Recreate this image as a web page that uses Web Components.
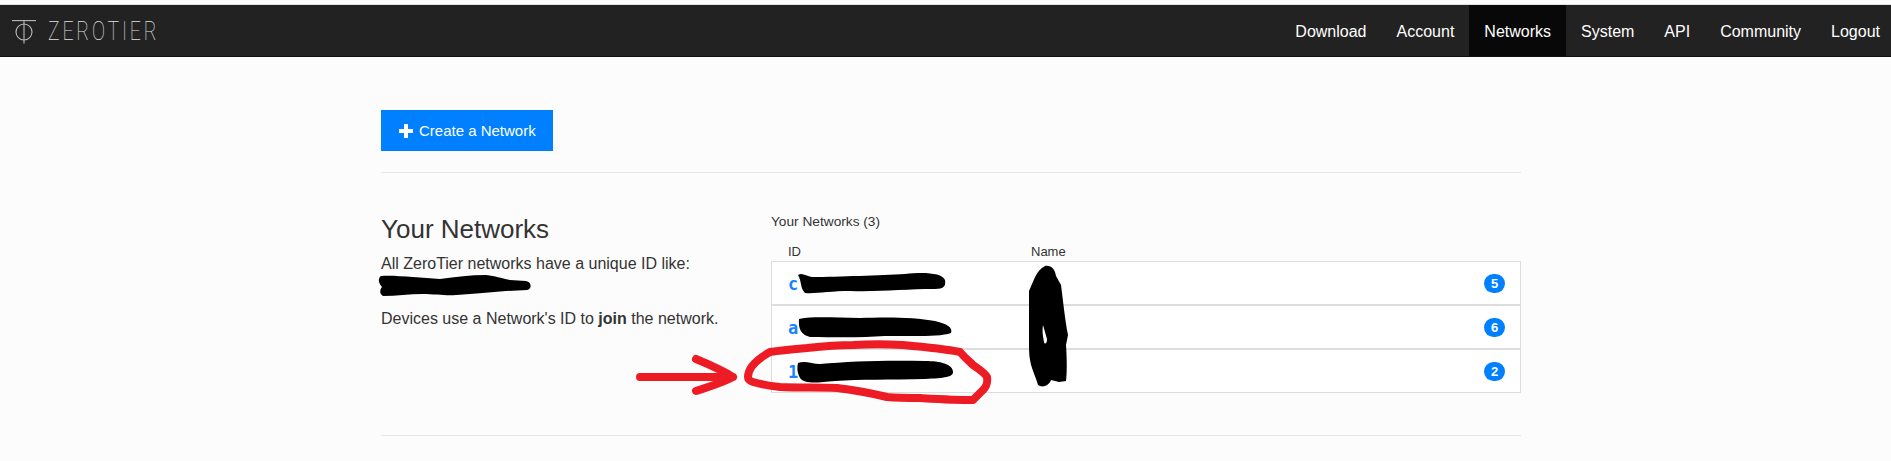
<!DOCTYPE html>
<html>
<head>
<meta charset="utf-8">
<title>ZeroTier</title>
<style>
    html, body { margin: 0; padding: 0; background: #fcfcfc; }
    body { font-family: "Liberation Sans", Arial, sans-serif; color: #333; height: 461px; overflow: hidden; }
</style>
</head>
<body>
<zt-navbar></zt-navbar>
<zt-page>
    <zt-create-button>Create a Network</zt-create-button>
    <zt-networks-section>
        <zt-network-row slot="rows" net-id="c" badge="5"></zt-network-row>
        <zt-network-row slot="rows" net-id="a" badge="6"></zt-network-row>
        <zt-network-row slot="rows" net-id="1" badge="2"></zt-network-row>
    </zt-networks-section>
</zt-page>
<zt-annotations></zt-annotations>

<script>
class ZtNavbar extends HTMLElement {
    constructor() {
        super();
        this.attachShadow({ mode: "open" });
    }
    connectedCallback() {
        const links = ["Download", "Account", "Networks", "System", "API", "Community", "Logout"];
        const items = links.map(name => `<a href="#" class="${name === "Networks" ? "active" : ""}">${name}</a>`).join("");
        this.shadowRoot.innerHTML = `
        <style>
            :host { display: block; margin-top: 4px; border-top: 1px solid #e0e0e0; }
            nav {
                background-color: #222;
                border-bottom: 1px solid #111;
                display: flex;
                height: 51px;
                justify-content: space-between;
            }
            .brand { align-items: flex-start; display: flex; padding: 15px 0 0 12px; }
            .brand svg { display: block; }
            .word {
                color: #e2e2e2;
                font-family: Roboto, "Liberation Sans", sans-serif;
                font-size: 25px;
                font-weight: 100;
                letter-spacing: 3.6px;
                line-height: 24px;
                margin-left: 12px;
                transform: scaleX(.78);
                transform-origin: left center;
            }
            .links { display: flex; margin-right: -4px; }
            a {
                align-items: center;
                color: #fff;
                display: flex;
                font-size: 16px;
                padding: 2px 15px 0;
                text-decoration: none;
            }
            a.active { background-color: #080808; }
        </style>
        <nav>
            <div class="brand">
                <svg width="24" height="24" viewBox="0 0 24 24" fill="none" stroke="#bbb" stroke-width="1.1">
                    <path d="M0 .6H24"/>
                    <circle cx="12" cy="12" r="8"/>
                    <path d="M12 .6V23.5"/>
                </svg>
                <span class="word">ZEROTIER</span>
            </div>
            <div class="links">${items}</div>
        </nav>
    `;
    }
}

class ZtPage extends HTMLElement {
    constructor() {
        super();
        this.attachShadow({ mode: "open" });
        this.shadowRoot.innerHTML = `
        <style>
            :host { display: block; margin: 0 370px 0 381px; padding-top: 53px; }
        </style>
        <slot></slot>
    `;
    }
}

class ZtCreateButton extends HTMLElement {
    constructor() {
        super();
        this.attachShadow({ mode: "open" });
        this.shadowRoot.innerHTML = `
        <style>
            :host { display: block; }
            button {
                align-items: center;
                background-color: #0080ff;
                border: 0;
                color: #fff;
                display: flex;
                font-family: "Liberation Sans", sans-serif;
                font-size: 15px;
                gap: 6px;
                height: 41px;
                padding: 0 18px;
                white-space: nowrap;
                width: 172px;
            }
            svg { display: block; flex: none; }
        </style>
        <button>
            <svg width="14" height="14" viewBox="0 0 14 14" fill="#fff"><path d="M5 0H9V5H14V9H9V14H5V9H0V5H5Z"/></svg>
            <slot></slot>
        </button>
    `;
    }
}

class ZtNetworksSection extends HTMLElement {
    constructor() {
        super();
        this.attachShadow({ mode: "open" });
        this.shadowRoot.innerHTML = `
        <style>
            :host { display: block; border-top: 1px solid #e6e6e6; border-bottom: 1px solid #e6e6e6; margin-top: 21px; }
            .cols { display: grid; grid-template-columns: 390px 1fr; height: 262px; }
            h2 { color: #333; font-size: 26px; font-weight: 400; line-height: 30px; margin: 41px 0 0; }
            p { color: #333; font-size: 16px; line-height: 22px; margin: 0; }
            .intro { margin-top: 9px; }
            .scrawl { display: block; margin: 0 0 12px -3px; }
            .caption { color: #333; font-size: 13.7px; line-height: 16px; margin-top: 41px; }
            .heads { display: grid; font-size: 13px; grid-template-columns: 243px 1fr; line-height: 16px; margin-top: 14px; padding-left: 17px; }
            .rows { background: #fff; border: 1px solid #ddd; margin-top: 1px; }
        </style>
        <div class="cols">
            <div>
                <h2>Your Networks</h2>
                <p class="intro">All ZeroTier networks have a unique ID like:</p>
                <svg class="scrawl" width="154" height="21" viewBox="0 0 154 21">
                    <path fill="#000" d="M3 1C18 0 42 3 62 4C78 2 92 0 108 0C118 1 122 3 132 5L148 6C154 7 154 14 149 15L128 16C112 17 98 19 78 20C68 21 58 19 44 19C32 19 18 21 5 21C1 19 2 14 4 12C0 8 0 3 3 1Z"/>
                </svg>
                <p>Devices use a Network's ID to <b>join</b> the network.</p>
            </div>
            <div>
                <div class="caption">Your Networks (3)</div>
                <div class="heads"><span>ID</span><span>Name</span></div>
                <div class="rows"><slot name="rows"></slot></div>
            </div>
        </div>
    `;
    }
}

class ZtNetworkRow extends HTMLElement {
    constructor() {
        super();
        this.attachShadow({ mode: "open" });
    }
    connectedCallback() {
        const id = this.getAttribute("net-id") || "";
        const badge = this.getAttribute("badge") || "";
        this.shadowRoot.innerHTML = `
        <style>
            :host { display: block; }
            :host(:not(:last-child)) { border-bottom: 2px solid #ddd; }
            .row { align-items: center; display: flex; height: 42px; justify-content: space-between; padding: 0 15px 0 16px; }
            a { color: #1a84ff; font-family: "DejaVu Sans Mono", monospace; font-size: 17px; font-weight: 700; padding-top: 2px; text-decoration: none; }
            span {
                background: #0080ff;
                border-radius: 10px;
                color: #fff;
                font-size: 13px;
                font-weight: 700;
                height: 19px;
                line-height: 19px;
                text-align: center;
                width: 21px;
            }
        </style>
        <div class="row"><a href="#">${id}</a><span>${badge}</span></div>
    `;
    }
}

// hand drawn marks painted over the screenshot, they sit on a free canvas
class ZtAnnotations extends HTMLElement {
    constructor() {
        super();
        this.attachShadow({ mode: "open" });
        this.shadowRoot.innerHTML = `
        <style>
            :host { display: block; height: 461px; left: 0; pointer-events: none; position: absolute; top: 0; width: 1891px; }
            svg { display: block; }
        </style>
        <svg width="1891" height="461" viewBox="0 0 1891 461" fill="none" stroke-linecap="round" stroke-linejoin="round">
            <g fill="#000">
                <path d="M798 275C802 272 806 276 812 277C840 277 880 275 905 274C925 272 942 273 945 280C946 286 944 289 935 289C905 289 880 292 850 291C830 291 815 294 805 293C800 288 802 282 798 275Z"/>
                <path d="M799 319C815 316 835 318 860 318C885 317 915 317 935 321C948 324 953 328 951 333C940 337 915 336 885 336C860 338 830 337 810 337C802 335 798 330 799 319Z"/>
                <path d="M798 363C805 360 812 364 820 364C850 361 890 360 925 361C940 361 953 364 953 372C953 377 945 378 925 379C890 380 860 379 835 381C815 383 805 384 800 378C797 372 797 368 798 363Z"/>
                <path fill-rule="evenodd" d="M1045 266C1051 265 1055 269 1056 276L1061 285C1063 300 1065 320 1068 335L1066 345C1067 360 1067 372 1066 381L1059 382L1051 380C1049 386 1042 388 1038 385C1036 378 1034 374 1032 368C1029 358 1029 352 1029 340V291C1033 283 1036 270 1045 266ZM1043 325L1047 339C1047 345 1044 344 1044 342C1043 336 1042 332 1043 325Z"/>
            </g>
            <g stroke="#ed1c24" stroke-width="8">
                <path d="M640 377H733M696 359C708 364 722 370 733 377C722 383 708 387 696 391"/>
                <path d="M748 377C748 370 752 362 770 352C782 350 795 349 807 348C825 346 840 345 853 345C870 344 885 344 903 345C925 347 945 349 960 352C965 358 970 362 973 365C980 370 985 373 987 377C988 384 986 387 983 390L973 400C955 400 938 399 920 398C908 398 898 398 887 397C870 393 855 390 837 388C818 387 800 388 780 387C770 386 760 384 753 382C750 381 748 380 748 377Z"/>
            </g>
        </svg>
    `;
    }
}

customElements.define("zt-navbar", ZtNavbar);
customElements.define("zt-page", ZtPage);
customElements.define("zt-create-button", ZtCreateButton);
customElements.define("zt-networks-section", ZtNetworksSection);
customElements.define("zt-network-row", ZtNetworkRow);
customElements.define("zt-annotations", ZtAnnotations);
</script>
</body>
</html>
